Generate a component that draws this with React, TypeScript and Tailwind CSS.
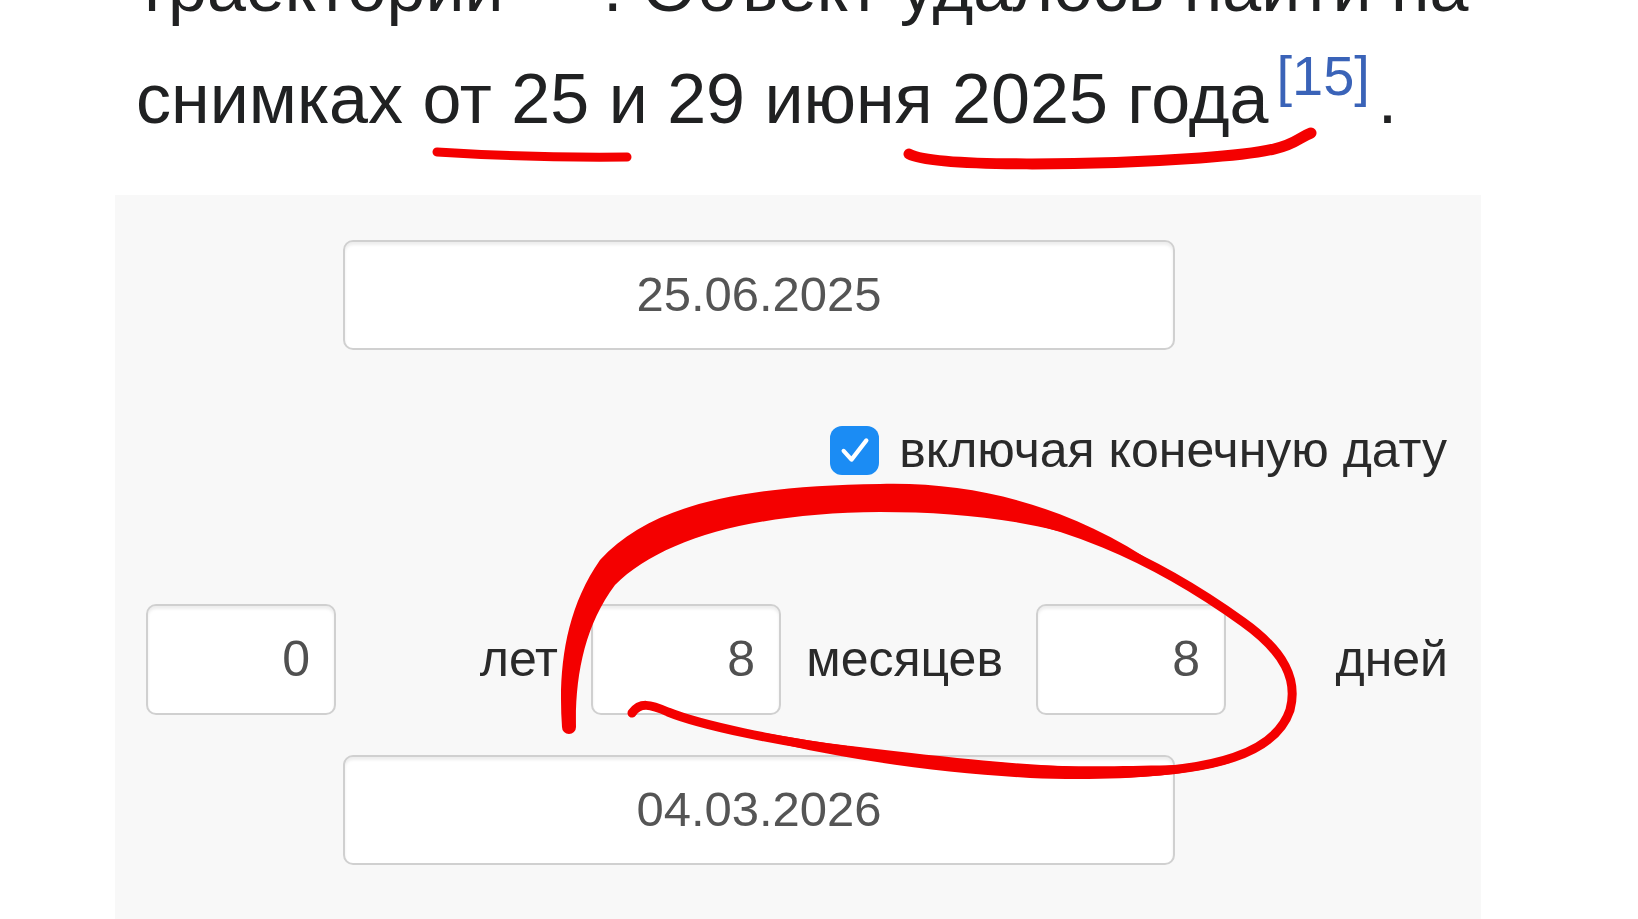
import React from "react";

const boxCls =
  "bg-white border-2 border-[#d0d0d0] rounded-[10px] shadow-[inset_0_3px_3px_rgba(0,0,0,0.07)]";

function NumBox({ value }: { value: string }) {
  return (
    <div className={`${boxCls} h-[111px] flex items-center justify-end pr-[24px] text-[50px] text-[#505050]`}>
      {value}
    </div>
  );
}

function Label({ text }: { text: string }) {
  return <div className="flex items-center justify-end pr-[33px] text-[50px] text-[#2a2a2a]">{text}</div>;
}

function DateBox({ value }: { value: string }) {
  return (
    <div className={`${boxCls} ml-[228px] w-[832px] h-[110px] flex items-center justify-center text-[49px] text-[#555]`}>
      {value}
    </div>
  );
}

// red marker strokes drawn over the screenshot
function Annotations() {
  const red = "#f40000";
  return (
    <svg className="absolute inset-0 pointer-events-none" width="1638" height="919" viewBox="0 0 1638 919">
      <g fill="none" stroke={red} strokeLinecap="round" strokeLinejoin="round">
        <path d="M 437 152 Q 530 158 627 157" strokeWidth="9" />
        <path d="M 909 154 C 935 168, 1100 165, 1200 158 S 1290 141, 1311 133" strokeWidth="11" />
        <path
          d="M 960 505 C 1060 518, 1150 555, 1243 622 C 1285 652, 1298 680, 1290 710 C 1275 755, 1210 770, 1127 773 C 1030 772, 930 760, 846 750 C 780 742, 700 725, 668 712 C 650 704, 640 702, 632 713"
          strokeWidth="9"
        />
      </g>
      <g fill={red}>
        {/* left side and thick top of the loop */}
        <path d="M 562 727 C 558 670, 565 610, 600 560 C 650 505, 740 486, 880 484 C 990 481, 1090 515, 1174 577 C 1090 528, 990 512, 880 512 C 750 513, 660 540, 615 585 C 585 625, 575 675, 576 727 A 7 7 0 0 1 562 727 Z" />
        {/* thicker bottom stroke */}
        <path d="M 1230 763 C 1180 778, 1100 781, 1030 778 C 930 772, 800 756, 690 718 C 800 743, 930 758, 1030 765 C 1100 768, 1180 765, 1230 763 Z" />
      </g>
    </svg>
  );
}

export default function App() {
  return (
    <div className="relative h-[919px] w-[1638px] overflow-hidden bg-white font-['Liberation_Sans',Arial,sans-serif]">
      <p className="mt-[-69px] pl-[136px] text-[70px] leading-[112px] text-[#202122]">
        траектории<sup className="text-[56px] text-[#3a63b8] ml-[6px]">[14]</sup>. Объект удалось найти на
        <br />
        снимках от 25 и 29 июня 2025 года<sup className="text-[56px] text-[#3a63b8] ml-[8px] mr-[8px]">[15]</sup>.
      </p>

      <div className="mt-[40px] ml-[115px] w-[1366px] bg-[#f8f8f8] pt-[45px] pb-[60px]">
        <DateBox value="25.06.2025" />

        <div className="mt-[70px] h-[60px] flex items-center justify-end gap-[20px] pr-[34px]">
          <div className="w-[49px] h-[49px] rounded-[12px] bg-[#1b8cf4] flex items-center justify-center">
            <svg width="42" height="42" viewBox="0 0 24 24" fill="none" stroke="white" strokeWidth="2.4" strokeLinecap="round" strokeLinejoin="round">
              <polyline points="5.5 12.5 10 17.5 18.5 6.5" />
            </svg>
          </div>
          <span className="text-[50px] text-[#2a2a2a]">включая конечную дату</span>
        </div>

        <div className="mt-[124px] pl-[31px] grid grid-cols-[190px_1fr_190px_1fr_190px_1fr]">
          <NumBox value="0" />
          <Label text="лет" />
          <NumBox value="8" />
          <Label text="месяцев" />
          <NumBox value="8" />
          <Label text="дней" />
        </div>

        <div className="mt-[40px]">
          <DateBox value="04.03.2026" />
        </div>
      </div>

      <Annotations />
    </div>
  );
}
